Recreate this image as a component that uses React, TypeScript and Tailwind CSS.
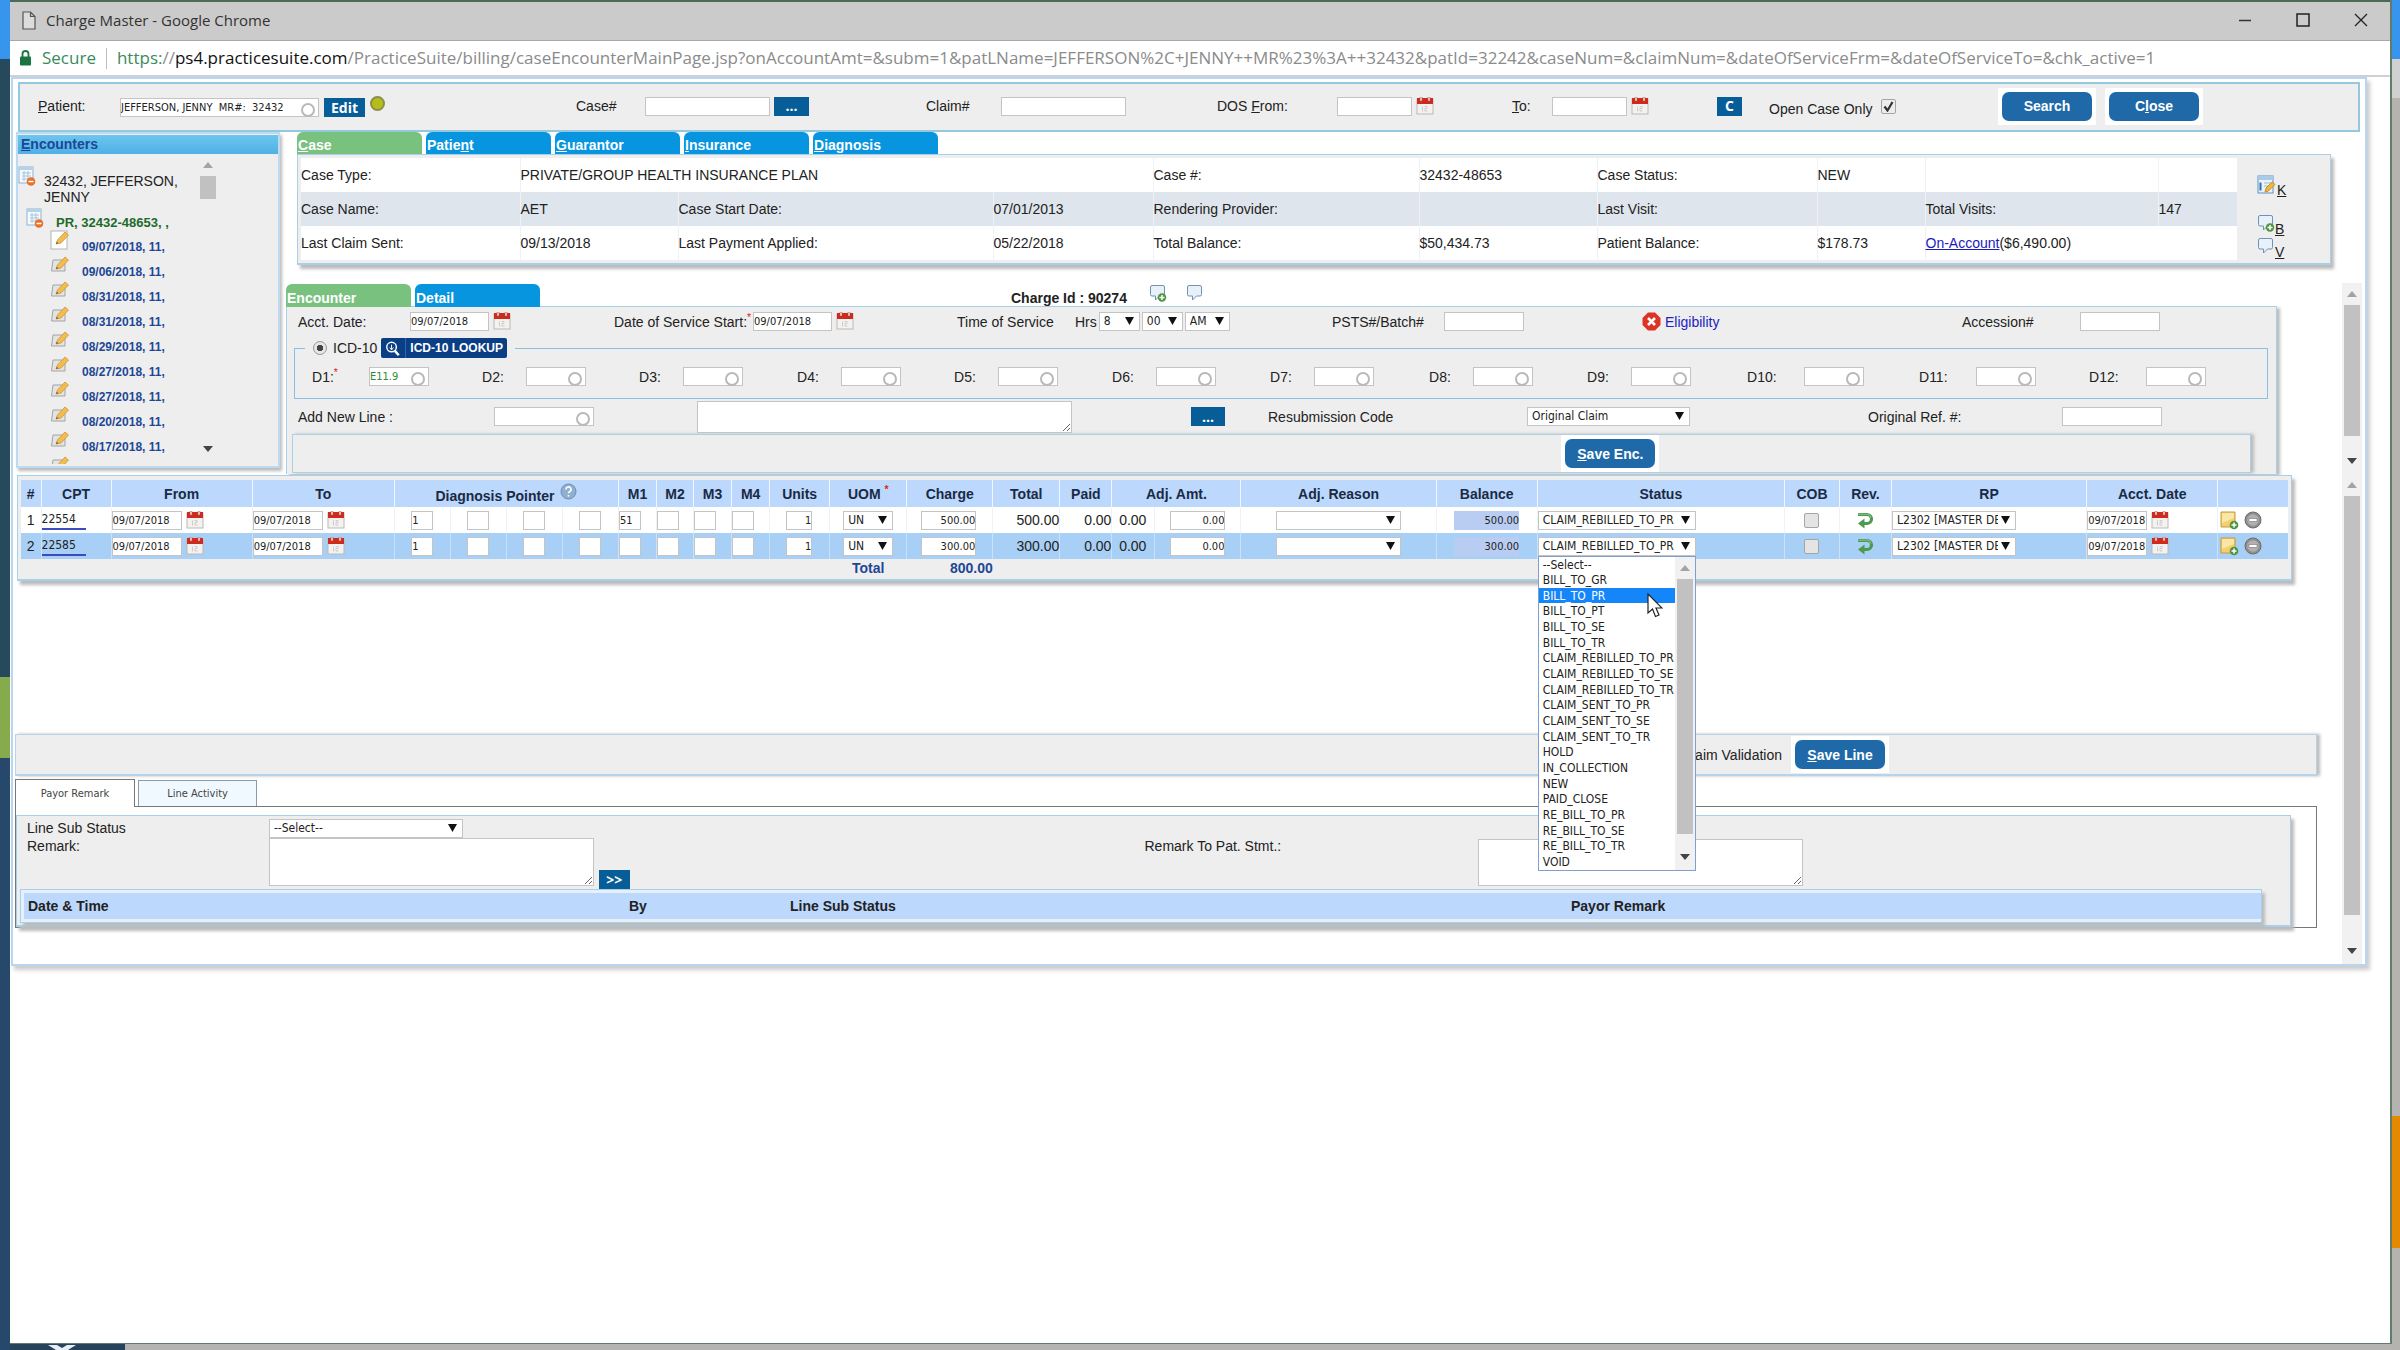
import type { ReactNode } from "react";
import clsx from "clsx";

const TAHOMA = "font-['DejaVu_Sans_Condensed','DejaVu_Sans',sans-serif]";
const BOX = "border border-[#c4c4c4] bg-white";

const caseTabs = [
  { pre: "", key: "C", post: "ase", active: true },
  { pre: "Patie", key: "n", post: "t", active: false },
  { pre: "", key: "G", post: "uarantor", active: false },
  { pre: "", key: "I", post: "nsurance", active: false },
  { pre: "", key: "D", post: "iagnosis", active: false },
];

const encounterDates = [
  "09/07/2018, 11,",
  "09/06/2018, 11,",
  "08/31/2018, 11,",
  "08/31/2018, 11,",
  "08/29/2018, 11,",
  "08/27/2018, 11,",
  "08/27/2018, 11,",
  "08/20/2018, 11,",
  "08/17/2018, 11,",
  "",
];

const statuses = [
  "--Select--",
  "BILL_TO_GR",
  "BILL_TO_PR",
  "BILL_TO_PT",
  "BILL_TO_SE",
  "BILL_TO_TR",
  "CLAIM_REBILLED_TO_PR",
  "CLAIM_REBILLED_TO_SE",
  "CLAIM_REBILLED_TO_TR",
  "CLAIM_SENT_TO_PR",
  "CLAIM_SENT_TO_SE",
  "CLAIM_SENT_TO_TR",
  "HOLD",
  "IN_COLLECTION",
  "NEW",
  "PAID_CLOSE",
  "RE_BILL_TO_PR",
  "RE_BILL_TO_SE",
  "RE_BILL_TO_TR",
  "VOID",
];

const lines = [
  { id: 1, cpt: "22554", m1: "51", amount: "500.00", selected: false },
  { id: 2, cpt: "22585", m1: "", amount: "300.00", selected: true },
];

/* ---------- icons ---------- */

function CalendarIcon() {
  return (
    <svg width="18" height="18" viewBox="0 0 18 18" className="shrink-0">
      <rect x="1" y="2" width="16" height="15" fill="#f4f2f0" stroke="#bdb8b4" />
      <rect x="1" y="1" width="16" height="6" fill="#cf2a1e" />
      <rect x="4" y="0" width="2" height="4" fill="#e9e4e0" stroke="#b5483f" strokeWidth=".5" />
      <rect x="12" y="0" width="2" height="4" fill="#e9e4e0" stroke="#b5483f" strokeWidth=".5" />
      <path d="M6.5 9.500v5M8.500 9.500h2.500v2h-2v2.500h2.500" stroke="#cfcac6" fill="none" />
    </svg>
  );
}

function FolderIcon() {
  return (
    <svg width="18" height="20" viewBox="0 0 18 20" className="shrink-0">
      <rect x="1" y="1" width="14" height="16" fill="#f4f9fd" stroke="#8fb1cf" />
      <rect x="1" y="1" width="14" height="3" fill="#b6d2ea" />
      <path d="M4 7h9M4 10h9M4 13h6M6 5v10M10 5v10" stroke="#a9c4db" />
      <circle cx="13" cy="15.500" r="4.300" fill="#e8702a" />
      <path d="M10.500 15.500h5" stroke="#fff" strokeWidth="1.500" />
    </svg>
  );
}

function NoteIcon({ first }: { first?: boolean }) {
  return (
    <svg width="20" height="20" viewBox="0 0 20 20" className="shrink-0">
      {first ? (
        <rect x="1" y="1" width="16" height="18" fill="#fff" stroke="#b4b4b4" />
      ) : (
        <path d="M3 5h12v11H1.500z" fill="#e3e3e3" stroke="#a3a3a3" />
      )}
      <path d="M6 14l1.500-4L15 2l3.500 3-7.500 8z" fill="#f3bd4e" stroke="#c9953a" strokeWidth=".8" />
      <path d="M6 14l.8-2.200 1.600 1.500z" fill="#6a5a4a" />
    </svg>
  );
}

function BubbleIcon({ plus }: { plus?: boolean }) {
  return (
    <svg width="18" height="19" viewBox="0 0 18 19" className="shrink-0">
      <path
        d="M3 1.500h11a1.500 1.500 0 0 1 1.500 1.500v7.500a1.500 1.500 0 0 1-1.500 1.500h-3.500l-4 4V12H3a1.500 1.500 0 0 1-1.500-1.500V3A1.500 1.500 0 0 1 3 1.500z"
        fill="#e8f1fa"
        stroke="#6f93b5"
      />
      {plus && (
        <>
          <circle cx="13" cy="13.500" r="4.200" fill="#4f9440" />
          <path d="M10.500 13.500h5M13 11v5" stroke="#fff" strokeWidth="1.500" />
        </>
      )}
    </svg>
  );
}

function CaseEditIcon() {
  return (
    <svg width="20" height="20" viewBox="0 0 20 20" className="shrink-0">
      <rect x="1" y="1" width="15" height="17" fill="#eaf3fb" stroke="#5d8fbf" />
      <rect x="1" y="1" width="15" height="4" fill="#a8cbea" />
      <path d="M3.500 7.500v8" stroke="#2c6eb5" strokeWidth="2" />
      <path d="M7 8h7M7 11h5" stroke="#9dbbd6" />
      <path d="M8 17l1-4 6-6 3 2.500-6.500 6.500z" fill="#f2b63d" stroke="#b98224" strokeWidth=".8" />
    </svg>
  );
}

function ReverseIcon() {
  return (
    <svg width="18" height="18" viewBox="0 0 18 18" className="mx-auto">
      <path d="M2 3.500h9a4.500 4.500 0 0 1 0 9H7" fill="none" stroke="#4b9a4e" strokeWidth="3.200" />
      <path d="M8.500 7.500v10L2 12.500z" fill="#4b9a4e" />
      <path d="M2 3.200h9.500a4 4 0 0 1 3.500 3.500" fill="none" stroke="#8cc48a" />
    </svg>
  );
}

function AddNoteIcon() {
  return (
    <svg width="19" height="19" viewBox="0 0 19 19">
      <path d="M1 1h14v15H1z" fill="#f4cf6c" stroke="#c99a3d" />
      <path d="M2 2h12v5L2 12z" fill="#fae7a8" />
      <circle cx="14" cy="14" r="4.300" fill="#4f9440" />
      <path d="M11.500 14h5M14 11.500v5" stroke="#fff" strokeWidth="1.500" />
    </svg>
  );
}

function MinusIcon() {
  return (
    <svg width="18" height="18" viewBox="0 0 18 18">
      <circle cx="9" cy="9" r="8" fill="#8e8e8e" stroke="#6d6d6d" />
      <circle cx="9" cy="9" r="5.800" fill="#b0b0b0" />
      <rect x="5" y="7.500" width="8" height="3" fill="#fff" stroke="#777" strokeWidth=".6" />
    </svg>
  );
}

function Triangle({ up, muted }: { up?: boolean; muted?: boolean }) {
  return (
    <svg width="10" height="6" viewBox="0 0 10 6" className="shrink-0">
      <path d={up ? "M0 6L5 0l5 6z" : "M0 0h10L5 6z"} fill={muted ? "#a3a3a3" : "#444"} />
    </svg>
  );
}

/* ---------- form pieces ---------- */

function TextBox({
  id,
  label,
  value = "",
  className,
}: {
  id?: string;
  label?: string;
  value?: string;
  className?: string;
}) {
  return (
    <input
      id={id}
      aria-label={label}
      type="text"
      defaultValue={value}
      className={clsx("block h-[19px] min-w-0 text-[11px]", TAHOMA, BOX, className)}
    />
  );
}

function LookupBox({ id, value = "", className, size }: { id: string; value?: string; className?: string; size: string }) {
  return (
    <span className={clsx("relative block h-[19px] overflow-hidden", size)}>
      <TextBox id={id} value={value} className={clsx("w-full", className)} />
      <span className="absolute right-[4px] top-[5px] size-[14px] rounded-full border-2 border-[#b9b9b9]" />
    </span>
  );
}

function DropDown({
  id,
  label,
  value = "",
  className,
  children,
}: {
  id?: string;
  label?: string;
  value?: string;
  className?: string;
  children?: ReactNode;
}) {
  return (
    <span className={clsx("relative block", className)}>
      <select
        id={id}
        aria-label={label}
        className={clsx("block h-[19px] w-full appearance-none pr-[17px] pl-[4px] text-[12px] leading-[17px]", TAHOMA, BOX)}
      >
        <option>{value}</option>
      </select>
      <svg width="9" height="8" viewBox="0 0 9 8" className="pointer-events-none absolute right-[6px] top-[5px]">
        <path d="M0 0h9L4.500 8z" fill="#111" />
      </svg>
      {children}
    </span>
  );
}

function SmallButton({ children, className }: { children: ReactNode; className?: string }) {
  return (
    <button
      type="button"
      className={clsx(
        "h-[19px] bg-[#075d98] text-center font-['Open_Sans',sans-serif] text-[14px] leading-[18px] font-bold text-white",
        className,
      )}
    >
      {children}
    </button>
  );
}

function BigButton({ children }: { children: ReactNode }) {
  return (
    <span className="inline-block bg-white p-[4px]">
      <button type="button" className="block h-[29px] w-[90px] rounded-[7px] bg-[#2069a8] text-[14px] font-bold text-white">
        {children}
      </button>
    </span>
  );
}

function ScrollBar({ thumb, className }: { thumb: string; className?: string }) {
  return (
    <div className={clsx("flex w-[20px] shrink-0 flex-col items-center pt-[8px] pb-[10px]", className)}>
      <Triangle up muted />
      <div className={clsx("mt-[8px] mb-auto w-[16px] bg-[#c1c1c1]", thumb)} />
      <Triangle />
    </div>
  );
}

function DateField({ id, label, className }: { id?: string; label?: string; className: string }) {
  return (
    <div className="flex items-start gap-[4px]">
      <TextBox id={id} label={label} value="09/07/2018" className={className} />
      <CalendarIcon />
    </div>
  );
}

/* ---------- page sections ---------- */

function TitleBar() {
  return (
    <header className="font-['Open_Sans',sans-serif]">
      <div className="flex h-[41px] items-center border-t-2 border-b border-t-[#4c6b57] border-b-[#a9a9a9] bg-[#cbcbcb] pr-[22px] pb-[2px] pl-[12px]">
        <svg width="14" height="19" viewBox="0 0 14 19">
          <path d="M1 1h7.500L13 5.500V18H1zM8.500 1v4.500H13" fill="#dcdcdc" stroke="#555" strokeWidth="1.200" />
        </svg>
        <h1 className="ml-[10px] text-[15px] text-[#333]">Charge Master - Google Chrome</h1>
        <div className="ml-auto flex items-center gap-[44px]">
          <button type="button" aria-label="Minimize">
            <svg width="14" height="14"><path d="M1 7.500h12" stroke="#333" strokeWidth="1.500" /></svg>
          </button>
          <button type="button" aria-label="Maximize">
            <svg width="14" height="14"><rect x="1" y="1" width="12" height="12" fill="none" stroke="#222" strokeWidth="1.500" /></svg>
          </button>
          <button type="button" aria-label="Close window">
            <svg width="14" height="14"><path d="M1 1l12 12M13 1L1 13" stroke="#222" strokeWidth="1.300" /></svg>
          </button>
        </div>
      </div>
      <div className="flex h-[36px] items-center border-b-2 border-[#cfcfd4] bg-white pl-[10px] text-[17px] whitespace-nowrap">
        <svg width="11" height="16" viewBox="0 0 11 16">
          <path d="M2.500 7V4a3 3 0 0 1 6 0v3" fill="none" stroke="#1a7340" strokeWidth="1.800" />
          <rect x="0" y="6.500" width="11" height="9" rx="1" fill="#1a7340" />
        </svg>
        <span className="ml-[11px] text-[#3b8a5b]">Secure</span>
        <span className="mx-[10px] h-[21px] w-px bg-[#bdbdbd]" />
        <span className="text-[#8b8b8b]">
          <span className="text-[#3b8a5b]">https:</span>//
          <span className="text-[#111]">ps4.practicesuite.com</span>
          /PracticeSuite/billing/caseEncounterMainPage.jsp?onAccountAmt=&amp;subm=1&amp;patLName=JEFFERSON%2C+JENNY++MR%23%3A++32432&amp;patId=32242&amp;caseNum=&amp;claimNum=&amp;dateOfServiceFrm=&amp;dateOfServiceTo=&amp;chk_active=1
        </span>
      </div>
    </header>
  );
}

function SearchBar() {
  return (
    <form className="mx-[5px] grid h-[50px] grid-cols-[100fr_456fr_69fr_281fr_75fr_216fr_120fr_175fr_40fr_165fr_52fr_229fr_360fr] items-center border-2 border-[#93c8df] bg-[#eee] pb-[2px]">
      <label htmlFor="patient" className="pl-[18px]"><u>P</u>atient:</label>
      <div className="flex items-center gap-[5px] pt-[3px]">
        <LookupBox id="patient" value="JEFFERSON, JENNY  MR#:  32432" size="w-[199px]" />
        <SmallButton className="w-[41px]">Edit</SmallButton>
        <span className="mb-[8px] size-[15px] rounded-full border-2 border-[#8a8f4a] bg-[#b5bd18]" />
      </div>
      <label htmlFor="case-no">Case#</label>
      <div className="flex items-center gap-[4px]">
        <TextBox id="case-no" className="w-[125px]" />
        <SmallButton className="w-[35px]">...</SmallButton>
      </div>
      <label htmlFor="claim-no">Claim#</label>
      <TextBox id="claim-no" className="w-[125px]" />
      <label htmlFor="dos-from">DOS <u>F</u>rom:</label>
      <div className="flex gap-[4px]">
        <TextBox id="dos-from" className="w-[75px]" />
        <CalendarIcon />
      </div>
      <label htmlFor="dos-to"><u>T</u>o:</label>
      <div className="flex gap-[4px]">
        <TextBox id="dos-to" className="w-[75px]" />
        <CalendarIcon />
      </div>
      <SmallButton className="w-[25px]">C</SmallButton>
      <div className="flex items-center gap-[8px]">
        <label htmlFor="open-only" className="mt-[5px]">Open Case Only</label>
        <span className="relative size-[15px]">
          <input
            id="open-only"
            type="checkbox"
            defaultChecked
            className="block size-[15px] appearance-none rounded-[2px] border border-[#a5a5a5] bg-[#ececec]"
          />
          <svg width="11" height="11" viewBox="0 0 11 11" className="pointer-events-none absolute top-[2px] left-[2px]">
            <path d="M1.500 5.500l3 4L9.500 1" fill="none" stroke="#333" strokeWidth="2.200" />
          </svg>
        </span>
      </div>
      <div className="flex gap-[9px]">
        <BigButton>Search</BigButton>
        <BigButton>C<u>l</u>ose</BigButton>
      </div>
    </form>
  );
}

function Encounters() {
  return (
    <aside className="mr-px ml-[3px] h-[336px] w-[264px] shrink-0 border-2 border-[#bcdaf0] bg-[#eee] pt-px shadow-[2px_3px_3px_#bbb]">
      <h2 className="h-[19px] bg-gradient-to-b from-[#6cc6ee] to-[#4fb0e6] pl-[3px] leading-[18px] font-bold text-[#1d4795]">
        <u>E</u>ncounters
      </h2>
      <div className="flex h-[310px]">
        <div className="w-[180px] overflow-hidden pt-[12px] leading-[16px]">
          <div className="flex h-[38px]">
            <FolderIcon />
            <p className="pt-[7px] pl-[8px] text-[#222]">32432, JEFFERSON,<br />JENNY</p>
          </div>
          <div className="mt-[4px] flex h-[20px] pl-[8px]">
            <FolderIcon />
            <p className="pt-[7px] pl-[12px] text-[13px] font-bold whitespace-nowrap text-[#1d6a2b]">PR, 32432-48653, ,</p>
          </div>
          <ul className="mt-[2px]">
            {encounterDates.map((date, i) => (
              <li key={i} className="flex h-[25px] pl-[32px]">
                <NoteIcon first={i === 0} />
                <a href="#" className="pt-[9px] pl-[12px] text-[12px] font-bold text-[#1d4795]">{date}</a>
              </li>
            ))}
          </ul>
        </div>
        <ScrollBar thumb="h-[23px]" className="mb-[2px] bg-[#eee]" />
      </div>
    </aside>
  );
}

function Tab({ active, children }: { active?: boolean; children: ReactNode }) {
  return (
    <button
      type="button"
      className={clsx(
        "h-full w-[125px] rounded-t-[6px] pt-[4px] pl-px text-left leading-[18px] font-bold text-white",
        active ? "bg-[#79c17e]" : "bg-[#0795e0]",
      )}
    >
      {children}
    </button>
  );
}

function CasePanel() {
  const cell = "border-l border-[#eef2f6]";
  return (
    <section className="mr-[34px] ml-[16px]">
      <nav className="flex h-[22px] gap-[4px]">
        {caseTabs.map((t) => (
          <Tab key={t.key} active={t.active}>
            {t.pre}<u>{t.key}</u>{t.post}
          </Tab>
        ))}
      </nav>
      <div className="flex h-[111px] border border-b-2 border-[#a9cfe9] bg-[#eee] pt-[3px] pb-[3px] pl-[3px] shadow-[3px_4px_3px_#bbb]">
        <table className="h-full flex-1 table-fixed text-left">
          <colgroup>
            <col className="w-[219px]" /><col className="w-[158px]" /><col className="w-[315px]" /><col className="w-[160px]" />
            <col className="w-[266px]" /><col className="w-[178px]" /><col className="w-[220px]" /><col className="w-[108px]" />
            <col className="w-[233px]" /><col className="w-[79px]" />
          </colgroup>
          <tbody>
            <tr className="bg-white">
              <td>Case Type:</td><td colSpan={3} className={cell}>PRIVATE/GROUP HEALTH INSURANCE PLAN</td>
              <td className={cell}>Case #:</td><td className={cell}>32432-48653</td>
              <td className={cell}>Case Status:</td><td className={cell}>NEW</td><td className={cell} /><td className={cell} />
            </tr>
            <tr className="bg-[#dfe5ec]">
              <td>Case Name:</td><td className={cell}>AET</td><td className={cell}>Case Start Date:</td><td className={cell}>07/01/2013</td>
              <td className={cell}>Rendering Provider:</td><td className={cell} /><td className={cell}>Last Visit:</td><td className={cell} />
              <td className={cell}>Total Visits:</td><td className={cell}>147</td>
            </tr>
            <tr className="bg-white">
              <td>Last Claim Sent:</td><td className={cell}>09/13/2018</td><td className={cell}>Last Payment Applied:</td>
              <td className={cell}>05/22/2018</td><td className={cell}>Total Balance:</td><td className={cell}>$50,434.73</td>
              <td className={cell}>Patient Balance:</td><td className={cell}>$178.73</td>
              <td colSpan={2} className={cell}><a href="#" className="text-[#1a1ac0] underline">On-Account</a>($6,490.00)</td>
            </tr>
          </tbody>
        </table>
        <div className="flex w-[93px] flex-col pt-[17px] pl-[20px]">
          <a href="#" className="flex h-[40px] items-start leading-[30px] underline"><CaseEditIcon />K</a>
          <a href="#" className="flex h-[23px] items-start leading-[30px] underline"><BubbleIcon plus />B</a>
          <a href="#" className="flex h-[23px] items-start leading-[30px] underline"><BubbleIcon />V</a>
        </div>
      </div>
    </section>
  );
}

function EncounterPanel() {
  return (
    <section className="mr-[65px] ml-[5px] min-w-0 flex-1">
      <div className="grid h-[23px] grid-cols-[725fr_1266fr] pt-px">
        <nav className="flex gap-[4px]">
          <Tab active>Encounter</Tab>
          <Tab>Detail</Tab>
        </nav>
        <div className="flex items-start font-bold">
          <span className="pt-[5px] leading-[18px]">Charge Id : 90274</span>
          <span className="ml-[22px] flex gap-[19px]"><BubbleIcon plus /><BubbleIcon /></span>
        </div>
      </div>
      <div className="h-[168px] border border-b-0 border-[#a9cfe9] bg-[#eee] shadow-[3px_2px_3px_#bbb]">
        <div className="grid h-[31px] grid-cols-[123fr_204fr_139fr_204fr_118fr_257fr_112fr_198fr_320fr_118fr_196fr] items-center pb-[2px] whitespace-nowrap">
          <label htmlFor="acct-date" className="pl-[11px]">Acct. Date:</label>
          <DateField id="acct-date" className="w-[79px]" />
          <label htmlFor="dos-start">Date of Service Start:<sup className="text-[#d22]">*</sup></label>
          <DateField id="dos-start" className="w-[79px]" />
          <span>Time of Service</span>
          <div className="flex items-center gap-[2px]">
            <label htmlFor="hrs">Hrs</label>
            <DropDown id="hrs" value="8" className="w-[41px]" />
            <DropDown label="Minutes" value="00" className="w-[41px]" />
            <DropDown label="AM or PM" value="AM" className="w-[45px]" />
          </div>
          <label htmlFor="batch">PSTS#/Batch#</label>
          <TextBox id="batch" className="w-[80px]" />
          <a href="#" className="flex items-center gap-[4px] text-[#2222c0]">
            <svg width="19" height="19" viewBox="0 0 19 19">
              <path d="M6 .5h7L18.500 6v7L13 18.500H6L.5 13V6z" fill="#dd3325" />
              <path d="M6 6l7 7M13 6l-7 7" stroke="#fff" strokeWidth="2.600" />
            </svg>
            Eligibility
          </a>
          <label htmlFor="accession">Accession#</label>
          <TextBox id="accession" className="w-[80px]" />
        </div>
        <fieldset className="mr-[8px] ml-[7px] h-[61px] border border-[#8cc0e0]">
          <legend className="ml-[10px] flex h-[20px] items-center px-[8px]">
            <input
              id="icd10"
              type="radio"
              defaultChecked
              className="size-[14px] appearance-none rounded-full border border-[#999] bg-[radial-gradient(#444_35%,#e6e6e6_40%)]"
            />
            <label htmlFor="icd10" className="ml-[6px]">ICD-10</label>
            <button
              type="button"
              className="ml-[4px] flex h-[20px] w-[126px] items-center rounded-[2px] bg-[#0a3f86] text-[12px] font-bold whitespace-nowrap text-white"
            >
              <svg width="25" height="20" viewBox="0 0 25 20" className="shrink-0 border-r border-[#2f67b5]">
                <circle cx="11" cy="9" r="5" fill="none" stroke="#fff" strokeWidth="1.500" />
                <path d="M14.500 13l4 4.500" stroke="#fff" strokeWidth="2.500" />
                <path d="M11 6.500v5M9 9.500l2 2.500 2-2.500" stroke="#fff" fill="none" />
              </svg>
              <span className="pl-[4px]">ICD-10 LOOKUP</span>
            </button>
          </legend>
          <div className="grid grid-cols-[187fr_157fr_158fr_157fr_158fr_158fr_159fr_158fr_160fr_172fr_170fr_178fr] pt-[9px]">
            {Array.from({ length: 12 }, (_, i) => (
              <div key={i} className={clsx("flex items-center", i === 0 && "pl-[17px]")}>
                <label htmlFor={`d${i + 1}`} className={i === 0 || i > 8 ? "w-[57px]" : "w-[44px]"}>
                  D{i + 1}:{i === 0 && <sup className="text-[#d22]">*</sup>}
                </label>
                <LookupBox id={`d${i + 1}`} value={i === 0 ? "E11.9" : ""} size="w-[60px]" className="text-[#2f8a3c]" />
              </div>
            ))}
          </div>
        </fieldset>
        <div className="grid h-[35px] grid-cols-[207fr_203fr_494fr_77fr_259fr_341fr_194fr_214fr] items-center">
          <label htmlFor="new-line" className="pl-[11px]">Add New Line :</label>
          <LookupBox id="new-line" size="w-[100px]" />
          <textarea aria-label="Line description" className={clsx("block h-[32px] w-[76%]", BOX)} />
          <SmallButton className="w-[34px]">...</SmallButton>
          <label htmlFor="resub">Resubmission Code</label>
          <DropDown id="resub" value="Original Claim" className="w-[163px]" />
          <label htmlFor="orig-ref">Original Ref. #:</label>
          <TextBox id="orig-ref" className="w-[100px]" />
        </div>
        <div className="mr-[25px] ml-[5px] grid h-[39px] grid-cols-[1269fr_689fr] border border-[#a9cfe9] shadow-[3px_0_3px_#bbb]">
          <span />
          <div><BigButton><u>S</u>ave Enc.</BigButton></div>
        </div>
      </div>
    </section>
  );
}

function StatusMenu() {
  return (
    <span className="absolute top-full left-0 z-20 flex h-[315px] w-full border border-[#7f9fcf] bg-white">
      <ul role="listbox" aria-label="Status" className={clsx("flex flex-1 flex-col text-[12px] leading-[16px]", TAHOMA)}>
        {statuses.map((s) => (
          <li
            key={s}
            role="option"
            aria-selected={s === "BILL_TO_PR"}
            className={clsx("min-h-0 flex-1 pl-[4px]", s === "BILL_TO_PR" ? "bg-[#1586fa] text-white" : "text-[#222]")}
          >
            {s}
          </li>
        ))}
      </ul>
      <ScrollBar thumb="h-[255px]" className="-ml-[3px] bg-[#f1f1f1]" />
      <svg width="16" height="25" viewBox="0 0 16 25" className="absolute top-[36px] left-[108px]">
        <path d="M1 1v19l4.500-4 3 7.500 3.500-1.500-3-7H15z" fill="#fff" stroke="#222" strokeWidth="1.200" />
      </svg>
    </span>
  );
}

function LinesTable() {
  const th = "border-l border-white/80 first:border-l-0";
  return (
    <section className="mr-[50px] ml-[4px] h-[106px] border border-b-2 border-[#a9cfe9] bg-[#eee] p-[3px] pt-[4px] shadow-[3px_4px_3px_#bbb]">
      <table className="w-full table-fixed">
        <colgroup>
          <col className="w-[20px]" /><col className="w-[70px]" /><col className="w-[141px]" /><col className="w-[142px]" />
          <col className="w-[56px]" /><col className="w-[56px]" /><col className="w-[56px]" /><col className="w-[56px]" />
          <col className="w-[38px]" /><col className="w-[37px]" /><col className="w-[38px]" /><col className="w-[38px]" />
          <col className="w-[60px]" /><col className="w-[77px]" /><col className="w-[86px]" /><col className="w-[67px]" />
          <col className="w-[52px]" /><col className="w-[43px]" /><col className="w-[86px]" /><col className="w-[195px]" />
          <col className="w-[101px]" /><col className="w-[247px]" /><col className="w-[55px]" /><col className="w-[52px]" />
          <col className="w-[195px]" /><col className="w-[131px]" /><col className="w-[70px]" />
        </colgroup>
        <thead>
          <tr className="h-[27px] bg-[#bcd8fd] text-[#1a2a44]">
            <th className={th}>#</th>
            <th className={th}>CPT</th>
            <th className={th}>From</th>
            <th className={th}>To</th>
            <th className={th} colSpan={4}>
              <span className="flex items-start justify-center gap-[6px]">
                <span className="pt-[4px]">Diagnosis Pointer</span>
                <svg width="17" height="17" viewBox="0 0 17 17">
                  <circle cx="8.500" cy="8.500" r="7.500" fill="#8fb0d3" stroke="#6d8db0" />
                  <path d="M6 6.500a2.500 2.500 0 1 1 3.500 2.200c-.8.400-1 .8-1 1.600M8.500 12v1.500" fill="none" stroke="#fff" strokeWidth="1.600" />
                </svg>
              </span>
            </th>
            <th className={th}>M1</th>
            <th className={th}>M2</th>
            <th className={th}>M3</th>
            <th className={th}>M4</th>
            <th className={th}>Units</th>
            <th className={th}>UOM <sup className="text-[#d22]">*</sup></th>
            <th className={th}>Charge</th>
            <th className={th}>Total</th>
            <th className={th}>Paid</th>
            <th className={th} colSpan={2}>Adj. Amt.</th>
            <th className={th}>Adj. Reason</th>
            <th className={th}>Balance</th>
            <th className={th}>Status</th>
            <th className={th}>COB</th>
            <th className={th}>Rev.</th>
            <th className={th}>RP</th>
            <th className={th}>Acct. Date</th>
            <th className={th} aria-label="Actions" />
          </tr>
        </thead>
        <tbody>
          {lines.map((l) => (
            <tr
              key={l.id}
              className={clsx("h-[26px] [&>td+td]:border-l", l.selected ? "bg-[#a8cff5] [&>td]:border-[#c9e1f9]" : "bg-white [&>td]:border-[#eef3f8]")}
            >
              <td className="text-center">{l.id}</td>
              <td>
                <input
                  aria-label="CPT"
                  defaultValue={l.cpt}
                  className={clsx("block h-[19px] w-[44px] border-b-2 border-[#3c4cc0] bg-transparent text-[12px]", TAHOMA)}
                />
              </td>
              <td><DateField label="From" className="w-[70px]" /></td>
              <td><DateField label="To" className="w-[70px]" /></td>
              {["1", "", "", ""].map((v, i) => (
                <td key={i}><TextBox label={`Pointer ${i + 1}`} value={v} className="mx-auto w-[22px]" /></td>
              ))}
              {[l.m1, "", "", ""].map((v, i) => (
                <td key={i}><TextBox label={`M${i + 1}`} value={v} className="w-[22px]" /></td>
              ))}
              <td><TextBox label="Units" value="1" className="ml-auto mr-[17px] w-[26px] text-right" /></td>
              <td><DropDown label="UOM" value="UN" className="mx-auto w-[50px]" /></td>
              <td><TextBox label="Charge" value={l.amount} className="ml-[14px] w-[55px] text-right" /></td>
              <td className="text-right">{l.amount}</td>
              <td className="text-right">0.00</td>
              <td className="pr-[8px] text-right">0.00</td>
              <td><TextBox label="Adj. amount" value="0.00" className="mx-auto w-[55px] text-right" /></td>
              <td><DropDown label="Adj. reason" className="mx-auto w-[125px]" /></td>
              <td>
                <input
                  aria-label="Balance"
                  readOnly
                  value={l.amount}
                  className={clsx("mx-auto block h-[19px] w-[65px] bg-[#b9cdf3] text-right text-[11px]", TAHOMA)}
                />
              </td>
              <td>
                <DropDown label="Status" value="CLAIM_REBILLED_TO_PR" className="w-[158px]">
                  {l.selected && <StatusMenu />}
                </DropDown>
              </td>
              <td>
                <input
                  aria-label="COB"
                  type="checkbox"
                  className="mx-auto block size-[15px] appearance-none rounded-[2px] border border-[#a5a5a5] bg-[#e4e4e4]"
                />
              </td>
              <td><ReverseIcon /></td>
              <td><DropDown label="RP" value="L2302 [MASTER DE" className="w-[124px]" /></td>
              <td><DateField label="Acct. date" className="w-[60px]" /></td>
              <td>
                <span className="flex items-center gap-[5px] pl-[2px]"><AddNoteIcon /><MinusIcon /></span>
              </td>
            </tr>
          ))}
        </tbody>
        <tfoot>
          <tr className="font-bold text-[#1d4795]">
            <td colSpan={13} />
            <td className="text-center">Total</td>
            <td className="text-right">800.00</td>
            <td colSpan={12} />
          </tr>
        </tfoot>
      </table>
    </section>
  );
}

function RemarkPanel() {
  return (
    <section className="mr-[25px] ml-[2px]">
      <nav className={clsx("flex h-[28px] items-end text-[11px] text-[#444]", TAHOMA)}>
        <button type="button" className="relative z-10 -mb-px h-[28px] w-[120px] border border-b-0 border-[#777] bg-white">
          Payor Remark
        </button>
        <button type="button" className="ml-[3px] h-[26px] w-[119px] border border-b-0 border-[#8e9aa5] bg-[#f0f9ff]">
          Line Activity
        </button>
      </nav>
      <div className="h-[122px] border border-[#777] bg-white pt-[8px]">
        <div className="mr-[25px] h-[112px] border border-b-2 border-[#a9cfe9] bg-[#eee] pt-[3px] shadow-[3px_4px_3px_#bbb]">
          <div className="grid grid-cols-[252fr_876fr_334fr_812fr] leading-[18px]">
            <div className="pl-[10px]">
              <label htmlFor="sub-status" className="block">Line Sub Status</label>
              <label htmlFor="remark" className="block">Remark:</label>
            </div>
            <div>
              <DropDown id="sub-status" value="--Select--" className="w-[194px]" />
              <div className="flex items-end gap-[5px]">
                <textarea id="remark" className={clsx("mb-[3px] block h-[48px] w-[325px]", BOX)} />
                <SmallButton className="w-[31px]">&gt;&gt;</SmallButton>
              </div>
            </div>
            <label htmlFor="stmt-remark" className="pt-[18px]">Remark To Pat. Stmt.:</label>
            <textarea id="stmt-remark" className={clsx("mt-[20px] block h-[47px] w-[325px]", BOX)} />
          </div>
          <div className="mr-[28px] ml-[3px] border border-[#a9cfe9] bg-[#e6f0fb] p-[3px] shadow-[3px_4px_3px_#bbb]">
            <table className="w-full table-fixed text-left">
              <colgroup>
                <col className="w-[605px]" /><col className="w-[161px]" /><col className="w-[781px]" /><col className="w-[690px]" />
              </colgroup>
              <thead>
                <tr className="h-[26px] bg-[#bcd8fd]">
                  <th className="pl-[4px]">Date &amp; Time</th>
                  <th>By</th>
                  <th>Line Sub Status</th>
                  <th>Payor Remark</th>
                </tr>
              </thead>
            </table>
          </div>
        </div>
      </div>
    </section>
  );
}

export default function App() {
  return (
    <div className="flex min-h-screen bg-[#b5b3af] font-['Liberation_Sans',Arial,sans-serif] text-[14px] leading-[18px] text-[#222]">
      <div className="flex w-[10px] shrink-0 flex-col bg-[#26486a]">
        <div className="h-[59px] bg-[#3795ee]" />
        <div className="h-[618px] bg-[#264a5c]" />
        <div className="h-[81px] bg-[#85ab4c]" />
      </div>
      <div className="flex min-w-0 flex-1 flex-col">
        <main className="flex-1 border-r-2 border-b border-[#5f7d6a] bg-white">
          <TitleBar />
          <div className="mr-[23px] ml-px border-2 border-[#b9d6f0] bg-white pt-[3px] shadow-[3px_4px_4px_#ccc]">
            <SearchBar />
            <div className="flex">
              <Encounters />
              <div className="min-w-0 flex-1">
                <CasePanel />
                <div className="mt-[18px] flex pr-[3px]">
                  <EncounterPanel />
                  <ScrollBar thumb="h-[131px]" className="bg-[#f1f1f1]" />
                </div>
              </div>
            </div>
            <div className="flex pr-[3px]">
              <div className="min-w-0 flex-1 pt-px pb-[36px]">
                <LinesTable />
                <div className="mt-[153px] mr-[25px] mb-[2px] ml-[2px] grid h-[42px] grid-cols-[1775fr_525fr] items-center border border-b-2 border-[#b5d3ea] bg-[#eee] shadow-[3px_0_3px_#bbb]">
                  <span className="pr-[9px] text-right">Claim Validation</span>
                  <div className="flex"><BigButton><u>S</u>ave Line</BigButton></div>
                </div>
                <RemarkPanel />
              </div>
              <ScrollBar thumb="h-[419px]" className="bg-[#f1f1f1]" />
            </div>
          </div>
        </main>
        <div className="h-[6px] bg-[#b4b4b2]">
          <div className="h-full w-[115px] bg-[#25435a] pl-[38px]">
            <svg width="30" height="6" viewBox="0 0 30 6">
              <path d="M0 1h9l5 3 5-3h9l-8 5H8z" fill="#e8eef2" />
            </svg>
          </div>
        </div>
      </div>
      <div className="flex w-[8px] shrink-0 flex-col bg-[#b5b3af]">
        <div className="h-[59px] bg-[#3795ee]" />
        <div className="h-[39px] bg-[#d0d0d0]" />
        <div className="mt-[1018px] h-[132px] bg-[#e58a00]" />
      </div>
    </div>
  );
}
